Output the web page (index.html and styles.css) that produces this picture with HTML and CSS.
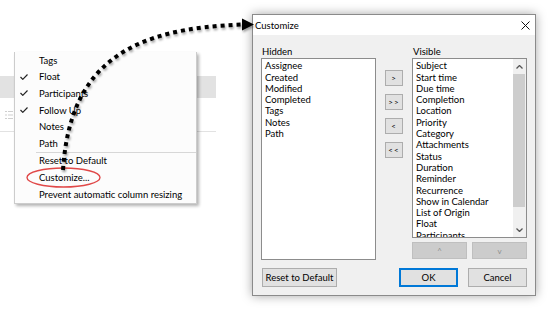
FILE: index.html
```html
<!DOCTYPE html>
<html lang="en">
<head>
<meta charset="UTF-8">
<title>Customize columns</title>
<link rel="stylesheet" href="styles.css">
</head>
<body>
<div class="desk">
    <div class="app">
        <div class="app-head"></div>
        <div class="app-row">
            <svg class="app-icon" width="8" height="10" viewBox="0 0 8 10">
                <path d="M0 1.5h2M3 1.5h5M0 5h2M3 5h5M0 8.5h2M3 8.5h5" stroke="#cfcfcf" stroke-width="1"/>
            </svg>
        </div>
    </div>

    <div class="menu">
        <div class="menu-item"><span class="check"></span><span>Tags</span></div>
        <div class="menu-item"><span class="check"><svg width="8" height="6" viewBox="0 0 8 6"><path d="M0.5 3l2.3 2.3L7.5 0.5" fill="none" stroke="#222" stroke-width="1.2"/></svg></span><span>Float</span></div>
        <div class="menu-item"><span class="check"><svg width="8" height="6" viewBox="0 0 8 6"><path d="M0.5 3l2.3 2.3L7.5 0.5" fill="none" stroke="#222" stroke-width="1.2"/></svg></span><span>Participants</span></div>
        <div class="menu-item"><span class="check"><svg width="8" height="6" viewBox="0 0 8 6"><path d="M0.5 3l2.3 2.3L7.5 0.5" fill="none" stroke="#222" stroke-width="1.2"/></svg></span><span>Follow Up</span></div>
        <div class="menu-item"><span class="check"></span><span>Notes</span></div>
        <div class="menu-item"><span class="check"></span><span>Path</span></div>
        <div class="menu-sep"></div>
        <div class="menu-item"><span class="check"></span><span>Reset to Default</span></div>
        <div class="menu-item"><span class="check"></span><span>Customize...</span></div>
        <div class="menu-item"><span class="check"></span><span>Prevent automatic column resizing</span></div>
    </div>

    <div class="dialog">
        <div class="titlebar">
            <span>Customize</span>
            <svg class="close" width="9" height="9" viewBox="0 0 9 9">
                <path d="M0.5 0.5l8 8M8.5 0.5l-8 8" stroke="#111" stroke-width="1"/>
            </svg>
        </div>
        <div class="dlg-body">
            <div class="columns">
                <div class="col">
                    <div class="label">Hidden</div>
                    <div class="listbox hidden-list">
                        <div class="items">
                            <div>Assignee</div>
                            <div>Created</div>
                            <div>Modified</div>
                            <div>Completed</div>
                            <div>Tags</div>
                            <div>Notes</div>
                            <div>Path</div>
                        </div>
                    </div>
                </div>
                <div class="move-btns">
                    <button class="btn small">&gt;</button>
                    <button class="btn small">&gt;&gt;</button>
                    <button class="btn small">&lt;</button>
                    <button class="btn small">&lt;&lt;</button>
                </div>
                <div class="col">
                    <div class="label">Visible</div>
                    <div class="listbox visible-list">
                        <div class="items">
                            <div>Subject</div>
                            <div>Start time</div>
                            <div>Due time</div>
                            <div>Completion</div>
                            <div>Location</div>
                            <div>Priority</div>
                            <div>Category</div>
                            <div>Attachments</div>
                            <div>Status</div>
                            <div>Duration</div>
                            <div>Reminder</div>
                            <div>Recurrence</div>
                            <div>Show in Calendar</div>
                            <div>List of Origin</div>
                            <div>Float</div>
                            <div>Participants</div>
                        </div>
                        <div class="scrollbar">
                            <div class="sb-arrow">
                                <svg width="7" height="4" viewBox="0 0 7 4"><path d="M0.5 3.5l3-3 3 3" fill="none" stroke="#555" stroke-width="1.3"/></svg>
                            </div>
                            <div class="sb-track"><div class="sb-thumb"></div></div>
                            <div class="sb-arrow">
                                <svg width="7" height="4" viewBox="0 0 7 4"><path d="M0.5 0.5l3 3 3-3" fill="none" stroke="#555" stroke-width="1.3"/></svg>
                            </div>
                        </div>
                    </div>
                    <div class="order-btns">
                        <button class="btn disabled">^</button>
                        <button class="btn disabled">v</button>
                    </div>
                </div>
            </div>
            <div class="footer">
                <button class="btn reset">Reset to Default</button>
                <div class="footer-right">
                    <button class="btn wide default">OK</button>
                    <button class="btn wide">Cancel</button>
                </div>
            </div>
        </div>
    </div>

    <svg class="annotation" width="554" height="312" viewBox="0 0 554 312">
        <ellipse cx="63.5" cy="177.5" rx="36.5" ry="9.5" fill="none" stroke="#e04848" stroke-width="1.4"/>
        <g class="dots">
            <path d="M63 170 C70 60 135 28 243 24.5" fill="none" stroke="#000" stroke-width="4" stroke-dasharray="4 4"/>
            <polygon points="242,18.5 254,24.5 242,30.5" fill="#000"/>
        </g>
    </svg>
</div>
</body>
</html>
```

FILE: styles.css
```css
body {
    margin: 0;
    background: #ffffff;
    font-family: Lato, "Noto Sans", sans-serif;
    font-size: 9.5px;
    color: #000;
}

.desk {
    position: relative;
    width: 554px;
    height: 312px;
    overflow: hidden;
}

/* app window behind the menu */
.app {
    position: absolute;
    left: 0;
    top: 54px;
    width: 216px;
}
.app-head {
    height: 22px;
    margin-top: 22px;
    background: #e2e2e2;
}
.app-row {
    height: 33px;
    display: flex;
    align-items: center;
    padding-left: 5px;
    border-bottom: 1px solid #e2e2e2;
}

/* context menu */
.menu {
    position: absolute;
    left: 14px;
    top: 52px;
    width: 181px;
    padding-bottom: 1px;
    background: #fcfcfc;
    border: 1px solid #cccccc;
    border-top: none;
    box-shadow: 2px 2px 3px rgba(0, 0, 0, 0.3);
}
.menu-item {
    display: flex;
    align-items: center;
    height: 16.6px;
    white-space: nowrap;
}
.check {
    width: 24px;
    display: flex;
    align-items: center;
    padding-left: 5px;
    box-sizing: border-box;
}
.menu-sep {
    height: 1px;
    margin-left: 21px;
    background: #d7d7d7;
}

/* dialog */
.dialog {
    position: absolute;
    left: 252px;
    top: 14px;
    width: 282px;
    height: 280px;
    display: flex;
    flex-direction: column;
    background: #f0f0f0;
    border: 1px solid #8a8a8a;
    box-shadow: 0 0 10px rgba(0, 0, 0, 0.35);
}
.titlebar {
    height: 20px;
    display: flex;
    align-items: center;
    justify-content: space-between;
    padding: 0 5px 0 2px;
    background: #ffffff;
}
.dlg-body {
    padding: 11px 8px 0 8px;
}
.columns {
    display: grid;
    grid-template-columns: 115px 18px 115px;
    column-gap: 9px;
}
.label {
    height: 12px;
    line-height: 12px;
    padding-left: 1px;
}
.listbox {
    background: #ffffff;
    border: 1px solid #8c8c8c;
    box-sizing: border-box;
    overflow: hidden;
}
.hidden-list {
    height: 202px;
}
.visible-list {
    height: 180px;
    display: flex;
}
.items {
    flex: 1;
    padding: 1.3px 2px 0 3px;
    line-height: 11.3px;
    white-space: nowrap;
}
.scrollbar {
    width: 13px;
    display: flex;
    flex-direction: column;
    background: #f0f0f0;
}
.sb-arrow {
    height: 15px;
    display: flex;
    align-items: center;
    justify-content: center;
}
.sb-track {
    flex: 1;
    padding: 0 1px 0 0;
}
.sb-thumb {
    height: 133px;
    background: #cdcdcd;
}

.move-btns {
    display: flex;
    flex-direction: column;
    gap: 8px;
    padding-top: 24px;
}
.btn {
    font-family: inherit;
    font-size: 9.5px;
    color: #000;
    background: #e1e1e1;
    border: 1px solid #adadad;
    padding: 0;
    box-sizing: border-box;
}
.btn.small {
    height: 16px;
    font-size: 8px;
    letter-spacing: 1px;
}
.order-btns {
    display: flex;
    gap: 5px;
    margin-top: 4px;
}
.btn.disabled {
    flex: 1;
    height: 17px;
    font-size: 8px;
    color: #8f8f8f;
    background: #cccccc;
    border-color: #bfbfbf;
}
.footer {
    display: flex;
    justify-content: space-between;
    margin-top: 8px;
    padding-left: 1px;
}
.footer-right {
    display: flex;
    gap: 10px;
}
.btn.reset {
    width: 75px;
    height: 19px;
}
.btn.wide {
    width: 59px;
    height: 19px;
}
.btn.default {
    border-color: #0078d7;
    box-shadow: inset 0 0 0 1px #0078d7;
}

/* annotation overlay */
.annotation {
    position: absolute;
    left: 0;
    top: 0;
    pointer-events: none;
}
.dots {
    filter: drop-shadow(1px 2px 1px rgba(0, 0, 0, 0.35));
}
```
